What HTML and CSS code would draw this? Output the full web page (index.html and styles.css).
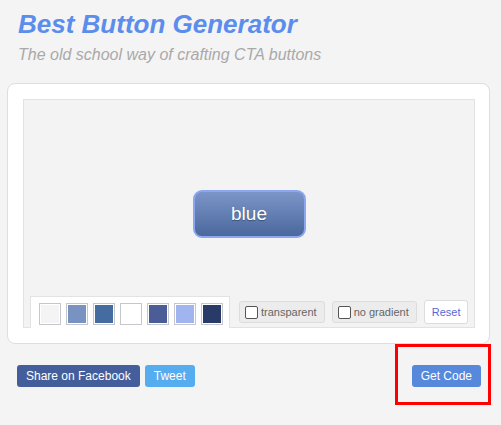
FILE: index.html
```html
<!DOCTYPE html>
<html lang="en">
<head>
    <meta charset="UTF-8">
    <title>Best Button Generator</title>
    <link rel="stylesheet" href="styles.css">
</head>
<body>
    <div class="page">
        <div class="header">
            <h1>Best Button Generator</h1>
            <p class="tagline">The old school way of crafting CTA buttons</p>
        </div>

        <div class="card">
            <div class="stage">
                <div class="preview">
                    <a class="cta" href="#">blue</a>
                </div>
                <div class="toolbar">
                    <div class="palette">
                        <span class="swatch" style="background:#f4f4f4"></span>
                        <span class="swatch" style="background:#7893c2"></span>
                        <span class="swatch" style="background:#456ca0"></span>
                        <span class="swatch" style="background:#ffffff"></span>
                        <span class="swatch" style="background:#4b5d96"></span>
                        <span class="swatch" style="background:#a0b4f0"></span>
                        <span class="swatch" style="background:#283a68"></span>
                    </div>
                    <label class="option"><span class="check"></span>transparent</label>
                    <label class="option"><span class="check"></span>no gradient</label>
                    <button class="reset">Reset</button>
                </div>
            </div>
        </div>

        <div class="actions">
            <div class="share">
                <a class="btn facebook" href="#">Share on Facebook</a>
                <a class="btn twitter" href="#">Tweet</a>
            </div>
            <div class="highlight">
                <a class="btn get-code" href="#">Get Code</a>
            </div>
        </div>
    </div>
</body>
</html>
```

FILE: styles.css
```css
body {
    margin: 0;
    background-color: #f4f4f4;
    font-family: "Liberation Sans", Arial, sans-serif;
}

.page {
    padding: 0 11px 0 7px;
}

.header {
    padding: 8px 0 0 11px;
}

.header h1 {
    margin: 0;
    font-size: 26px;
    line-height: 32px;
    font-style: italic;
    font-weight: bold;
    color: #5b8dec;
}

.tagline {
    margin: 5px 0 0;
    font-size: 16px;
    line-height: 20px;
    font-style: italic;
    color: #a9a9a9;
}

.card {
    margin-top: 18px;
    background-color: #ffffff;
    border: 1px solid #dedede;
    border-radius: 8px;
    padding: 15px 14px 15px 15px;
}

.stage {
    height: 227px;
    background-color: #f3f3f3;
    border: 1px solid #e2e2e2;
    display: flex;
    flex-direction: column;
}

.preview {
    flex: 1;
    display: flex;
    justify-content: center;
    align-items: center;
    padding-top: 32px;
}

.cta {
    width: 109px;
    height: 44px;
    display: flex;
    justify-content: center;
    align-items: center;
    border: 2px solid #8ca7ef;
    border-radius: 9px;
    background: linear-gradient(#7c95c9, #4a689d);
    color: #ffffff;
    font-size: 19px;
    text-decoration: none;
    text-shadow: 0 1px 1px rgba(0, 0, 0, 0.35);
}

.toolbar {
    display: flex;
    align-items: center;
    padding: 0 7px 0 6px;
    margin-bottom: -1px;
}

.palette {
    display: flex;
    flex-shrink: 0;
    gap: 5px;
    background-color: #ffffff;
    border: 1px solid #e3e3e3;
    border-bottom: none;
    padding: 6px 6px 3px 8px;
    margin-right: 9px;
    align-self: flex-end;
}

.swatch {
    width: 18px;
    height: 18px;
    border: 1px solid #c6c7cc;
    box-shadow: inset 0 0 0 1px #ffffff;
    padding: 1px;
    background-clip: content-box;
}

.option {
    display: flex;
    flex-shrink: 0;
    align-items: center;
    gap: 3px;
    height: 20px;
    padding: 0 7px 0 5px;
    margin-right: 7px;
    background-color: #ececec;
    border: 1px solid #dcdcdc;
    border-radius: 3px;
    font-size: 11px;
    color: #666666;
    white-space: nowrap;
}

.check {
    width: 11px;
    height: 11px;
    background-color: #ffffff;
    border: 1px solid #555555;
    border-radius: 2px;
}

.reset {
    margin-left: auto;
    flex-shrink: 0;
    height: 24px;
    padding: 0 7px;
    background-color: #ffffff;
    border: 1px solid #dcdcdc;
    border-radius: 3px;
    font-family: inherit;
    font-size: 11px;
    color: #5868d6;
}

.actions {
    display: flex;
    justify-content: space-between;
    align-items: flex-start;
    margin-right: -1px;
}

.share {
    display: flex;
    gap: 5px;
    padding: 21px 0 0 10px;
}

.btn {
    display: inline-block;
    height: 22px;
    line-height: 22px;
    padding: 0 9px;
    border-radius: 3px;
    font-size: 12px;
    color: #ffffff;
    text-decoration: none;
}

.facebook {
    background-color: #445e9c;
}

.twitter {
    background-color: #55acee;
}

.get-code {
    background-color: #5688dc;
}

.highlight {
    border: 3px solid #ff0000;
    padding: 18px 7px 15px 14px;
}
```
